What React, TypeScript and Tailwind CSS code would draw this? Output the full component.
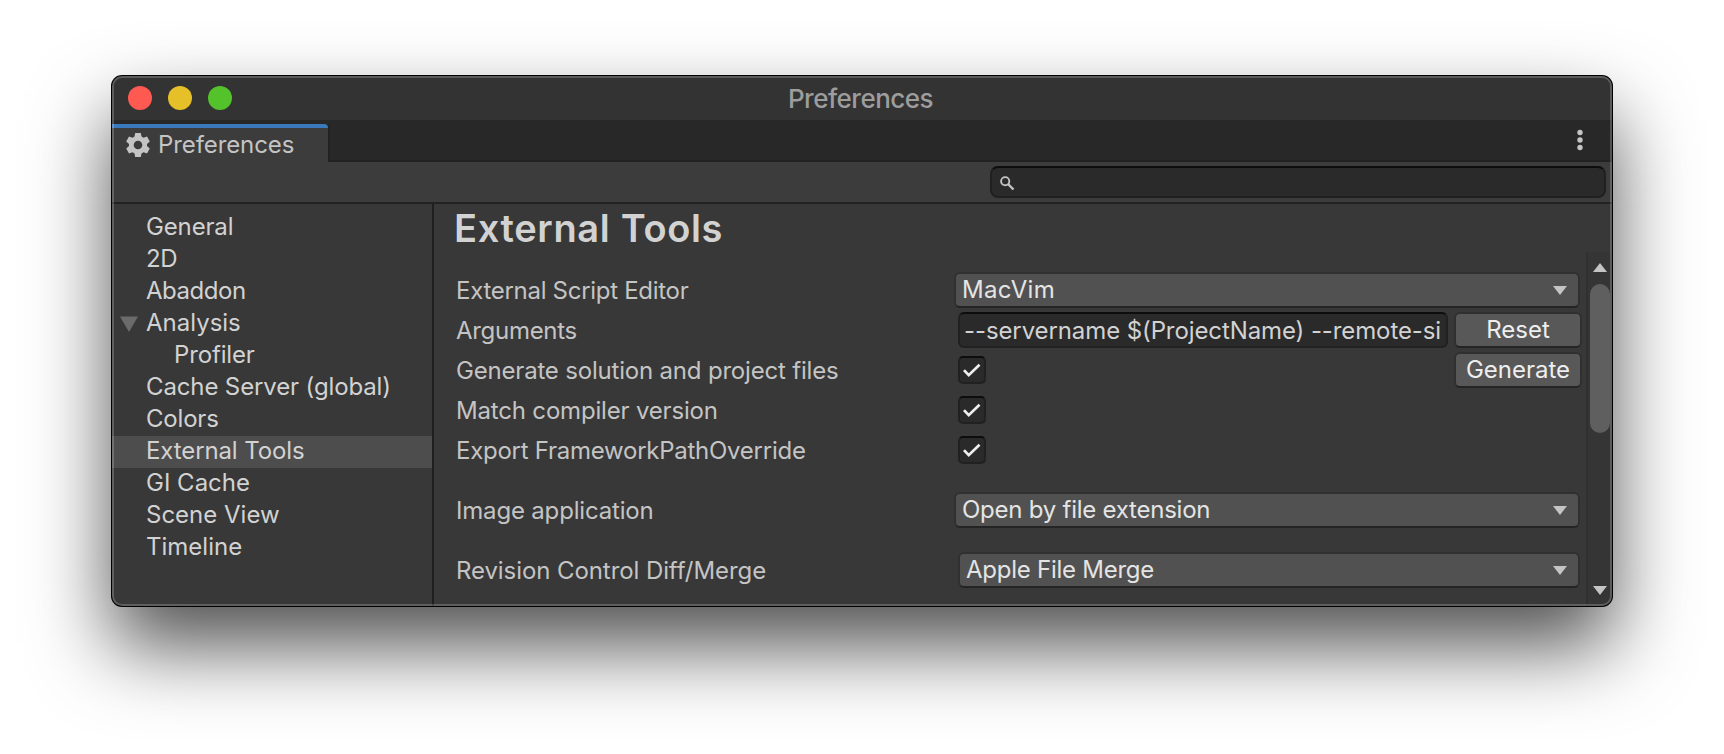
import type { ReactNode } from 'react';
import clsx from 'clsx';

const NAV = [
  { label: 'General', tracking: 'tracking-[-0.15px]' },
  { label: '2D', tracking: 'tracking-[-0.4px]' },
  { label: 'Abaddon', tracking: 'tracking-[-0.45px]' },
  { label: 'Analysis', open: true },
  { label: 'Profiler', child: true, tracking: 'tracking-[-0.15px]' },
  { label: 'Cache Server (global)', tracking: 'tracking-[-0.13px]' },
  { label: 'Colors', tracking: 'tracking-[-0.2px]' },
  { label: 'External Tools', selected: true, tracking: 'tracking-[-0.12px]' },
  { label: 'GI Cache' },
  { label: 'Scene View' },
  { label: 'Timeline' },
];

function Down({ className }: { className?: string }) {
  return (
    <svg className={className} width="14" height="9" viewBox="0 0 14 9">
      <path d="M0 0h14L7 9z" fill="#c4c4c4" />
    </svg>
  );
}

function Dropdown({ children, className }: { children: ReactNode; className?: string }) {
  return (
    <div
      className={clsx(
        'flex h-9 w-full items-center justify-between rounded-md border-2 border-[#303030] border-b-[#242424] bg-[#515151] pr-[11px] pl-[6px] text-[#e4e4e4]',
        className,
      )}
    >
      <span className="leading-8">{children}</span>
      <Down className="mt-px" />
    </div>
  );
}

function Button({ children }: { children: ReactNode }) {
  return (
    <button className="flex h-9 w-32 shrink-0 items-center justify-center rounded-md border-2 border-[#303030] border-b-[#242424] bg-[#585858] leading-8 text-[#eeeeee]">
      {children}
    </button>
  );
}

function Check() {
  return (
    <div className="mt-1 flex h-7 w-7 items-center justify-center rounded-[5px] border-2 border-[#212121] border-t-[#0d0d0d] bg-[#2a2a2a]">
      <svg width="24" height="24" viewBox="0 0 24 24">
        <path d="M4 12.200l4.700 5L19.500 6.700" fill="none" stroke="#eeeeee" strokeWidth="2.700" />
      </svg>
    </div>
  );
}

function Row({
  label,
  children,
  className,
  tracking,
}: {
  label: string;
  children: ReactNode;
  className?: string;
  tracking: string;
}) {
  return (
    <div className={clsx('flex h-10 items-start', className)}>
      <div className={clsx('w-[498px] shrink-0 pt-px leading-9', tracking)}>{label}</div>
      <div className="flex min-w-0 flex-1">{children}</div>
    </div>
  );
}

export default function App() {
  return (
    <div className="h-[754px] w-[1724px] overflow-hidden bg-white px-28 pt-[76px] font-['Inter',sans-serif] text-[24px]">
      <div className="relative flex h-[530px] w-[1500px] flex-col overflow-hidden rounded-[10px] bg-[#383838] text-[#c4c4c4] shadow-[0_0_0_1px_#000,0_40px_80px_rgba(0,0,0,0.69)]">
        <header className="relative flex h-11 shrink-0 items-center justify-center bg-[#333333]">
          <div className="absolute top-[10px] left-4 flex gap-4">
            <i className="h-6 w-6 rounded-full bg-[#ff5a52]" />
            <i className="h-6 w-6 rounded-full bg-[#e6c029]" />
            <i className="h-6 w-6 rounded-full bg-[#54c22b]" />
          </div>
          <span className="pr-[3px] text-[26px] font-medium tracking-[-0.5px] text-[#9d9d9d]">Preferences</span>
        </header>
        <div className="flex h-[42px] shrink-0 justify-between bg-[#282828] pt-1">
          <div className="flex w-[216px] items-center gap-2 rounded-tr border-t-4 border-[#3a79bb] bg-[#3c3c3c] pl-[14px]">
            <svg width="24" height="24" viewBox="0 0 24 24" fill="#c4c4c4">
              <path
                fillRule="evenodd"
                d="M9.200 0h5.600l.7 3.600 2 1.200L21 3.600l2.800 4.800L21 10.900v2.200l2.800 2.500-2.800 4.800-3.500-1.200-2 1.200-.7 3.600H9.200l-.7-3.600-2-1.200L3 20.400.2 15.600 3 13.100v-2.200L.2 8.400 3 3.600l3.500 1.200 2-1.200zM12 7.700a4.300 4.300 0 100 8.600 4.300 4.300 0 000-8.600z"
              />
            </svg>
            <span className="tracking-[-0.1px]">Preferences</span>
          </div>
          <div className="flex flex-1 justify-end border-b-2 border-l-2 border-[#222222] pt-[5px] pr-[29px]">
            <svg width="6" height="22" viewBox="0 0 6 22" fill="#c4c4c4">
              <circle cx="3" cy="3.500" r="2.700" />
              <circle cx="3" cy="11" r="2.700" />
              <circle cx="3" cy="18.500" r="2.700" />
            </svg>
          </div>
        </div>
        <div className="flex h-[42px] shrink-0 justify-end border-b-2 border-[#222222] bg-[#3c3c3c] pt-1 pr-[6px]">
          <div className="h-8 w-[616px] rounded-lg border-2 border-[#202020] border-t-[#0d0d0d] bg-[#2a2a2a] pt-2 pl-2">
            <svg width="15" height="15" viewBox="0 0 15 15" fill="none" stroke="#c4c4c4">
              <circle cx="5.200" cy="5.200" r="4.100" strokeWidth="1.900" />
              <path d="M8 8l5.500 5.500" strokeWidth="2.400" />
            </svg>
          </div>
        </div>
        <div className="flex min-h-0 flex-1">
          <nav className="w-[322px] shrink-0 border-r-2 border-[#1f1f1f] pt-2 text-[#d2d2d2]">
            {NAV.map((n) => (
              <div key={n.label} className={clsx('flex h-8 items-start', n.selected && 'bg-[#4d4d4d]')}>
                <div className={clsx('flex shrink-0', n.child ? 'w-[62px]' : 'w-[34px]')}>
                  {n.open && (
                    <svg className="mt-2 ml-2" width="18" height="16" viewBox="0 0 18 16">
                      <path d="M0 .5h18L9 16z" fill="#6b6b6b" />
                    </svg>
                  )}
                </div>
                <span className={clsx('leading-[30px]', n.tracking)}>{n.label}</span>
              </div>
            ))}
          </nav>
          <main className="flex min-w-0 flex-1 flex-col">
            <h1 className="h-12 shrink-0 pl-5 text-[38px] leading-[48px] font-semibold tracking-[0.65px] text-[#d2d2d2]">
              External Tools
            </h1>
            <div className="flex min-h-0 flex-1">
              <div className="w-[1152px] overflow-hidden pt-5 pl-[22px]">
                <Row label="External Script Editor" tracking="tracking-[-0.29px]">
                  <Dropdown className="mr-[6px] tracking-[0.35px]">MacVim</Dropdown>
                </Row>
                <Row label="Arguments" tracking="tracking-[-0.3px]">
                  <div className="ml-1 h-9 w-[490px] rounded-md border-2 border-[#212121] border-t-[#0d0d0d] bg-[#2a2a2a] pl-1">
                    <div className="overflow-hidden leading-[34px] tracking-[-0.1px] whitespace-nowrap text-[#d2d2d2]">
                      --servername $(ProjectName) --remote-si
                    </div>
                  </div>
                  <div className="ml-[6px]">
                    <Button>Reset</Button>
                  </div>
                </Row>
                <Row label="Generate solution and project files" tracking="tracking-[-0.19px]">
                  <div className="ml-1 flex-1">
                    <Check />
                  </div>
                  <div className="mr-1">
                    <Button>Generate</Button>
                  </div>
                </Row>
                <Row label="Match compiler version" tracking="tracking-[-0.18px]">
                  <div className="ml-1">
                    <Check />
                  </div>
                </Row>
                <Row label="Export FrameworkPathOverride" tracking="tracking-[-0.26px]">
                  <div className="ml-1">
                    <Check />
                  </div>
                </Row>
                <Row className="mt-5" label="Image application" tracking="tracking-[-0.18px]">
                  <Dropdown className="mr-[6px] tracking-[-0.24px]">Open by file extension</Dropdown>
                </Row>
                <Row className="mt-5" label="Revision Control Diff/Merge" tracking="tracking-[-0.08px]">
                  <Dropdown className="mr-[6px] ml-1 tracking-[-0.25px]">Apple File Merge</Dropdown>
                </Row>
              </div>
              <div className="flex w-[26px] shrink-0 flex-col items-center border-l-2 border-[#303030] bg-[#353535] pt-[11px]">
                <Down className="rotate-180" />
                <div className="mt-3 h-[149px] w-5 rounded-full bg-[#5f5f5f]" />
                <Down className="mt-auto mb-[11px]" />
              </div>
            </div>
          </main>
        </div>
        <div className="pointer-events-none absolute inset-0 rounded-[10px] border-2 border-white/20" />
      </div>
    </div>
  );
}
